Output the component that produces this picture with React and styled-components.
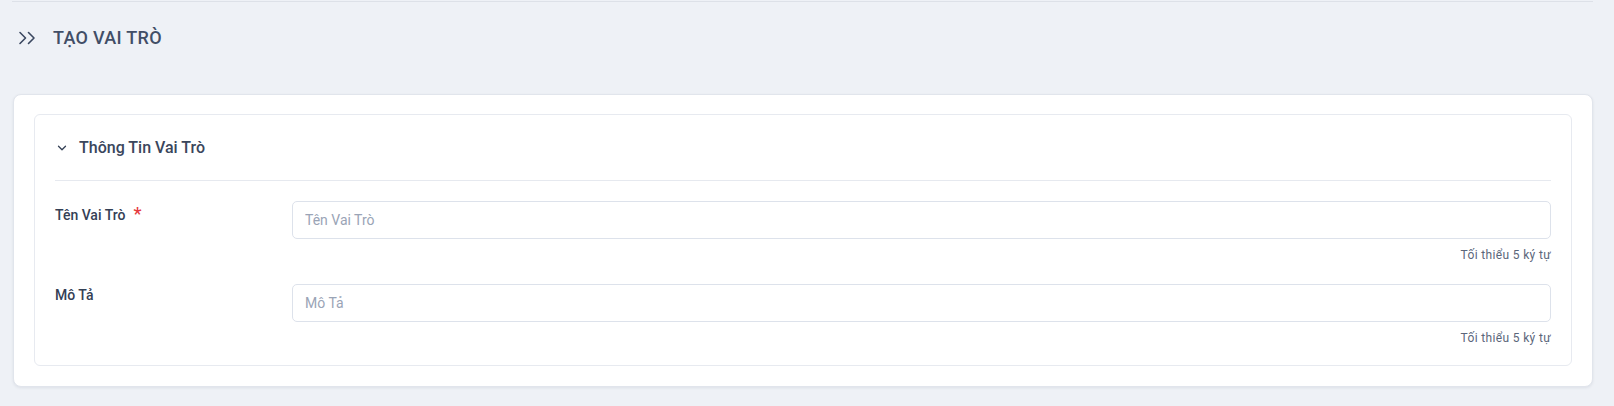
import styled, { createGlobalStyle } from "styled-components";

const GlobalStyle = createGlobalStyle`
  body {
    margin: 0;
    background: #eef1f6;
    font-family: Roboto, "Noto Sans", sans-serif;
    color: #344055;
  }
  * { box-sizing: border-box; }
`;

const Page = styled.div`
  padding: 0 21px 21px 12px;
`;

const TopBar = styled.div`
  border-top: 1px solid #dde1e8;
  margin-top: 1px;
  height: 93px;
  display: flex;
  align-items: flex-start;
  padding: 24px 0 0 6px;
`;

const TitleRow = styled.div`
  display: flex;
  align-items: center;
  gap: 15px;
  height: 24px;
`;

const Title = styled.h1`
  margin: 0;
  font-size: 18px;
  line-height: 24px;
  font-weight: 500;
  letter-spacing: 0.3px;
  color: #414e66;
`;

const Card = styled.div`
  margin-left: 1px;
  background: #fff;
  border: 1px solid #e1e5ec;
  border-radius: 8px;
  box-shadow: 0 1px 3px rgba(30, 40, 60, 0.08);
  padding: 19px 20px 20px;
`;

const Panel = styled.section`
  border: 1px solid #e7eaf0;
  border-radius: 6px;
  padding: 0 20px 19px;
`;

const PanelHead = styled.div`
  height: 66px;
  display: flex;
  align-items: center;
  gap: 10px;
  border-bottom: 1px solid #e6e9ef;
`;

const PanelTitle = styled.h2`
  margin: 0;
  font-size: 16px;
  font-weight: 500;
  color: #3a465c;
`;

const Fields = styled.div`
  padding-top: 20px;
  display: flex;
  flex-direction: column;
  gap: 21px;
`;

const Row = styled.div`
  display: grid;
  grid-template-columns: 237px 1fr;
`;

const Label = styled.label`
  font-size: 14px;
  font-weight: 500;
  line-height: 20px;
  padding-top: ${(p) => (p.$required ? "3px" : "1px")};
  color: #344055;
`;

const Star = styled.span`
  color: #e5393d;
  font-size: 18px;
  margin-left: 8px;
`;

const Control = styled.div`
  display: flex;
  flex-direction: column;
`;

const Input = styled.input`
  height: 38px;
  border: 1px solid #dde2eb;
  border-radius: 5px;
  padding: 0 12px;
  font-family: inherit;
  font-size: 14px;
  color: #344055;
  outline: none;
  &::placeholder {
    color: #9aa4b6;
  }
`;

const Hint = styled.div`
  margin-top: 8px;
  text-align: right;
  font-size: 12px;
  line-height: 16px;
  letter-spacing: 0.35px;
  color: #5b667a;
`;

const ChevronsIcon = () => (
  <svg width="20" height="14" viewBox="0 0 20 14" fill="none" stroke="#3b4860" strokeWidth="1.6" strokeLinecap="round" strokeLinejoin="round">
    <path d="M2 1.5 L7.5 7 L2 12.5" />
    <path d="M10.5 1.5 L16 7 L10.5 12.5" />
  </svg>
);

const ChevronDown = () => (
  <svg width="14" height="14" viewBox="0 0 24 24" fill="none" stroke="#344055" strokeWidth="2.2" strokeLinecap="round" strokeLinejoin="round">
    <path d="m6 9 6 6 6-6" />
  </svg>
);

const fields = [
  { id: "name", label: "Tên Vai Trò", required: true },
  { id: "desc", label: "Mô Tả", required: false },
];

export default function App() {
  return (
    <Page>
      <GlobalStyle />
      <TopBar>
        <TitleRow>
          <ChevronsIcon />
          <Title>TẠO VAI TRÒ</Title>
        </TitleRow>
      </TopBar>
      <Card>
        <Panel>
          <PanelHead>
            <ChevronDown />
            <PanelTitle>Thông Tin Vai Trò</PanelTitle>
          </PanelHead>
          <Fields>
            {fields.map((f) => (
              <Row key={f.id}>
                <Label htmlFor={f.id} $required={f.required}>
                  {f.label}
                  {f.required && <Star>*</Star>}
                </Label>
                <Control>
                  <Input id={f.id} placeholder={f.label} />
                  <Hint>Tối thiểu 5 ký tự</Hint>
                </Control>
              </Row>
            ))}
          </Fields>
        </Panel>
      </Card>
    </Page>
  );
}
